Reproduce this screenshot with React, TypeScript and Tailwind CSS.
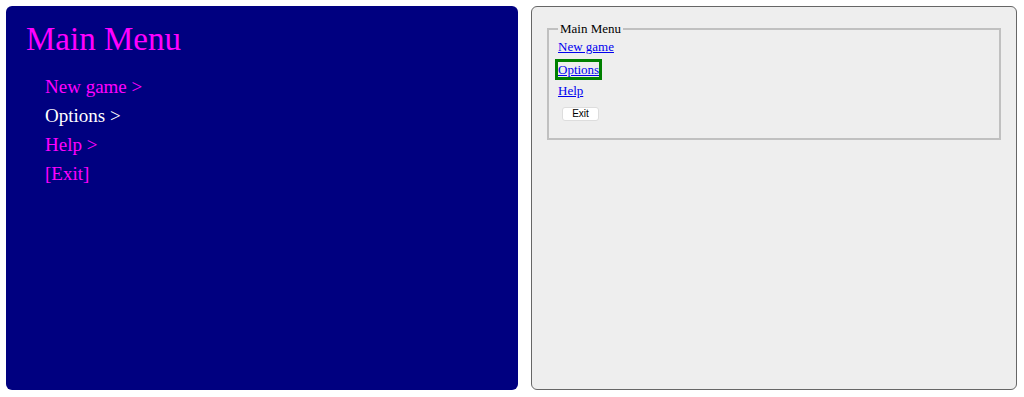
const menuItems = ['New game >', 'Options >', 'Help >', '[Exit]'];

export default function App() {
  return (
    <div className="flex h-[397px] w-[1024px] gap-[13px] bg-white pb-[7px] pl-[6px] pr-[7px] pt-[6px] font-['Liberation_Serif',serif]">
      {/* Styled menu */}
      <div className="w-[512px] rounded-[6px] bg-[#000080] pl-[20px] pt-[14px]">
        <h1 className="text-[33px] leading-[38px] text-[#ff00ff]">Main Menu</h1>
        <ul className="mt-[14px] pl-[19px]">
          {menuItems.map((item) => (
            <li
              key={item}
              className={`text-[19px] leading-[29px] ${item === 'Options >' ? 'text-white' : 'text-[#ff00ff]'}`}
            >
              {item}
            </li>
          ))}
        </ul>
      </div>

      {/* Plain HTML menu */}
      <div className="flex-1 rounded-[6px] border border-[#666] bg-[#eeeeee] px-[15px] pt-[14px]">
        <fieldset className="border-2 border-[#c0c0c0] pb-[17px] pl-[9px]">
          <legend className="px-[2px] text-[13px] leading-[15px] text-black">Main Menu</legend>
          <div className="flex flex-col items-start text-[13px] leading-[15px]">
            <a href="#" className="mt-[3px] text-[#0000ee] underline">
              New game
            </a>
            <a href="#" className="mt-[8px] text-[#0000ee] underline outline-[3px] outline-offset-0 outline-[#008000] outline-solid">
              Options
            </a>
            <a href="#" className="mt-[6px] text-[#0000ee] underline">
              Help
            </a>
            <button className="ml-[4px] mt-[9px] h-[14px] w-[37px] rounded-[3px] border border-[#dddddd] bg-white font-['Liberation_Sans',sans-serif] text-[10px] leading-[12px] text-black">
              Exit
            </button>
          </div>
        </fieldset>
      </div>
    </div>
  );
}
